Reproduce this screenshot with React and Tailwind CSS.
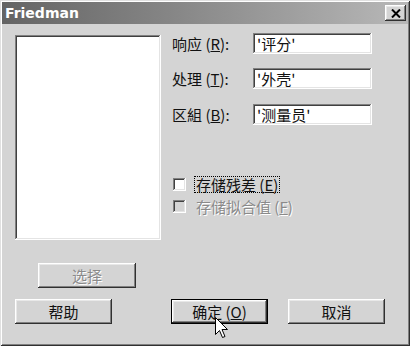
import React from "react";

const raised =
  "shadow-[inset_-1px_-1px_#303030,inset_1px_1px_#ffffff,inset_-2px_-2px_#808080,inset_2px_2px_#e8e8e8]";
const sunken =
  "shadow-[inset_-1px_-1px_#ffffff,inset_1px_1px_#808080,inset_-2px_-2px_#e4e4e4,inset_2px_2px_#404040]";
const cjk = "font-['SimSun','Noto_Sans_CJK_SC',sans-serif]";

function Field({ label, k, value }) {
  return (
    <div className="flex items-center h-[21px]">
      <div className="w-[81px] text-[15px] text-[#111] leading-none">
        {label} (<span className="underline">{k}</span>):
      </div>
      <div className={`w-[119px] h-[21px] bg-white ${sunken} flex items-center pl-[4px] text-[15px] leading-none text-[#111]`}>
        {value}
      </div>
    </div>
  );
}

function Btn({ children, className = "", disabled = false }) {
  return (
    <div
      className={`h-[25px] w-[97px] bg-[#d4d4d4] ${raised} flex items-center justify-center text-[15px] leading-none ${
        disabled ? "text-[#8a8a8a] [text-shadow:1px_1px_#ffffff]" : "text-[#111]"
      } ${className}`}
    >
      {children}
    </div>
  );
}

export default function App() {
  return (
    <div
      className={`w-[410px] h-[346px] bg-[#d4d4d4] relative flex flex-col p-[2px] ${cjk} shadow-[inset_1px_1px_#e0e0e0,inset_-1px_-1px_#303030,inset_2px_2px_#ffffff,inset_-2px_-2px_#808080]`}
    >
      {/* title bar */}
      <div className="h-[22px] flex items-center justify-between bg-gradient-to-r from-[#646464] to-[#b8b8b8] pl-[3px] pr-[2px]">
        <span className="font-['DejaVu_Sans',sans-serif] font-bold text-[14px] text-white">
          Friedman
        </span>
        <div className={`w-[21px] h-[16px] bg-[#d4d4d4] ${raised} flex items-center justify-center`}>
          <svg width="10" height="9" viewBox="0 0 10 9">
            <path d="M1 0.5 L9 8.5 M9 0.5 L1 8.5" stroke="#000" strokeWidth="2" />
          </svg>
        </div>
      </div>

      {/* body */}
      <div className="flex flex-col pl-[13px] pt-[9px]">
        <div className="flex">
          <div className="flex flex-col w-[146px]">
            <div className={`mt-[2px] h-[205px] bg-white ${sunken}`} />
            <Btn disabled className="ml-[23px] mt-[23px] w-[98px]">选择</Btn>
          </div>
          <div className="ml-[11px] flex flex-col">
            <Field label="响应" k="R" value="'评分'" />
            <div className="mt-[14px]">
              <Field label="处理" k="T" value="'外壳'" />
            </div>
            <div className="mt-[15px]">
              <Field label="区組" k="B" value="'测量员'" />
            </div>
            <div className="mt-[51px] flex items-center h-[17px]">
              <div className={`ml-[1px] w-[13px] h-[13px] bg-white ${sunken}`} />
              <div className="ml-[8px] border border-dotted border-black px-[1px] h-[17px] flex items-center text-[15px] leading-none text-[#111]">
                存储残差 (<span className="underline">E</span>)
              </div>
            </div>
            <div className="mt-[5px] flex items-center h-[17px]">
              <div className={`ml-[1px] w-[13px] h-[13px] bg-[#d4d4d4] ${sunken}`} />
              <div className="ml-[9px] px-[1px] text-[15px] leading-none text-[#8a8a8a] [text-shadow:1px_1px_#ffffff]">
                存储拟合值 (<span className="underline">F</span>)
              </div>
            </div>
          </div>
        </div>

        <div className="flex mt-[11px]">
          <Btn>帮助</Btn>
          <div className="ml-[59px] w-[97px] h-[25px] border border-black">
            <div className={`w-full h-full bg-[#d4d4d4] ${raised} flex items-center justify-center text-[15px] leading-none text-[#111]`}>
              确定 (<span className="underline">O</span>)
            </div>
          </div>
          <Btn className="ml-[20px]">取消</Btn>
        </div>
      </div>

      {/* mouse cursor */}
      <svg
        className="absolute left-[215px] top-[317px]"
        width="14"
        height="24"
        viewBox="0 0 14 24"
      >
        <path
          d="M0.5 0.5 L0.5 17.5 L4.5 13.5 L7.5 20.5 L10 19.5 L7 12.5 L12.5 12.5 Z"
          fill="#fff"
          stroke="#000"
          strokeWidth="1"
          strokeLinejoin="miter"
        />
      </svg>
    </div>
  );
}
